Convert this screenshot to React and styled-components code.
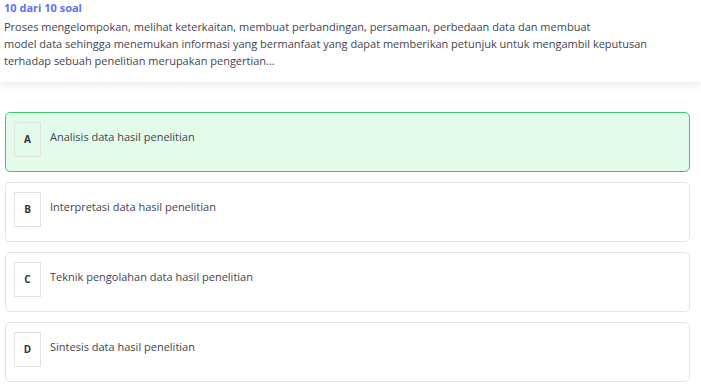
import React from 'react';
import styled, { createGlobalStyle } from 'styled-components';

const GlobalStyle = createGlobalStyle`
  body {
    margin: 0;
    background: #ffffff;
    font-family: "Open Sans", "Noto Sans", sans-serif;
  }
`;

const Header = styled.div`
  background: #ffffff;
  padding: 0 4px 13px 4px;
  box-shadow: 0 3px 10px rgba(0, 0, 0, 0.09);
`;

const Counter = styled.div`
  color: #5f6ff2;
  font-size: 11px;
  font-weight: 700;
  line-height: 16px;
`;

const Question = styled.p`
  margin: 2px 0 0 0;
  color: #444450;
  font-size: 11px;
  line-height: 17px;
  max-width: 690px;
`;

const Options = styled.div`
  display: flex;
  flex-direction: column;
  gap: 10px;
  padding: 30px 11px 0 5px;
`;

const Option = styled.div`
  display: flex;
  align-items: center;
  gap: 9px;
  height: 60px;
  box-sizing: border-box;
  padding: 0 0 0 8px;
  border: 1px solid ${p => (p.$selected ? '#3cc672' : '#e4e4e4')};
  background: ${p => (p.$selected ? '#e3fbea' : '#ffffff')};
  border-radius: 5px;
`;

const Letter = styled.div`
  width: 27px;
  height: 35px;
  box-sizing: border-box;
  border: 1px solid #e2e2e2;
  display: flex;
  align-items: center;
  justify-content: center;
  font-size: 10px;
  font-weight: 700;
  color: #333;
  margin-top: -6px;
`;

const Label = styled.span`
  font-size: 11px;
  color: #444450;
  margin-top: -11px;
`;

const options = [
  { key: 'A', text: 'Analisis data hasil penelitian', selected: true },
  { key: 'B', text: 'Interpretasi data hasil penelitian' },
  { key: 'C', text: 'Teknik pengolahan data hasil penelitian' },
  { key: 'D', text: 'Sintesis data hasil penelitian' },
];

export default function App() {
  return (
    <>
      <GlobalStyle />
      <Header>
        <Counter>10 dari 10 soal</Counter>
        <Question>
          Proses mengelompokan, melihat keterkaitan, membuat perbandingan, persamaan, perbedaan data dan membuat
          <br />
          model data sehingga menemukan informasi yang bermanfaat yang dapat memberikan petunjuk untuk mengambil keputusan
          <br />
          terhadap sebuah penelitian merupakan pengertian...
        </Question>
      </Header>
      <Options>
        {options.map(o => (
          <Option key={o.key} $selected={o.selected}>
            <Letter>{o.key}</Letter>
            <Label>{o.text}</Label>
          </Option>
        ))}
      </Options>
    </>
  );
}
